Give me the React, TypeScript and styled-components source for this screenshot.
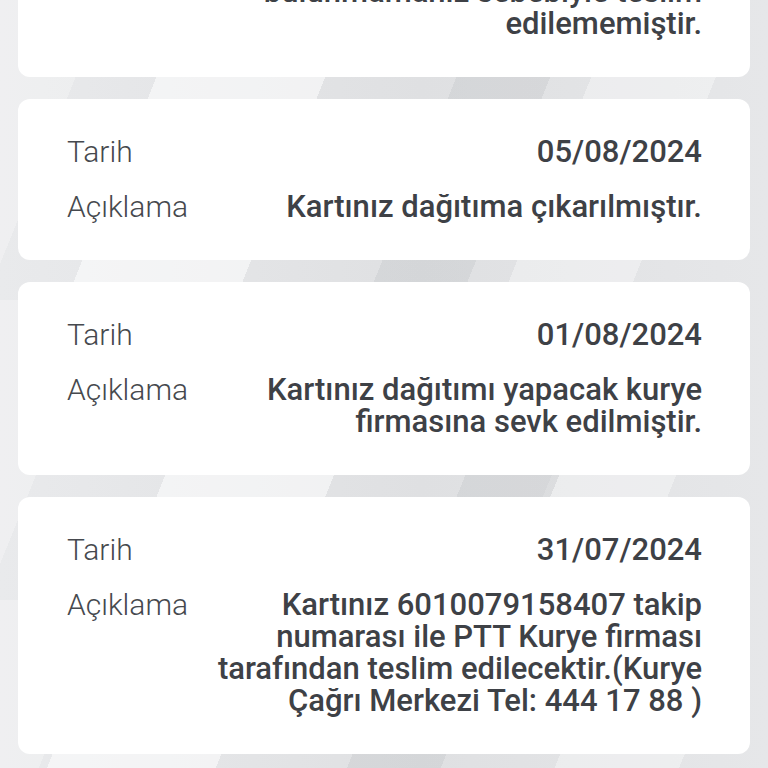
import React from 'react';
import styled, { createGlobalStyle } from 'styled-components';

type Movement = {
  id: number;
  date: string;
  description: string;
};

const movements: Movement[] = [
  {
    id: 1,
    date: '06/08/2024',
    description: 'Kartınız adresinizde\nbulunmamanız sebebiyle teslim\nedilememiştir.',
  },
  { id: 2, date: '05/08/2024', description: 'Kartınız dağıtıma çıkarılmıştır.' },
  {
    id: 3,
    date: '01/08/2024',
    description: 'Kartınız dağıtımı yapacak kurye\nfirmasına sevk edilmiştir.',
  },
  {
    id: 4,
    date: '31/07/2024',
    description:
      'Kartınız 6010079158407 takip\nnumarası ile PTT Kurye firması\ntarafından teslim edilecektir.(Kurye\nÇağrı Merkezi Tel: 444 17 88 )',
  },
];

const GlobalStyle = createGlobalStyle`
  html, body {
    margin: 0;
    padding: 0;
    height: 100%;
    overflow: hidden;
  }
  body {
    font-family: Roboto, "Noto Sans", sans-serif;
    background-color: #e4e5e7;
    background-image:
      linear-gradient(112deg, transparent 0 20%, rgba(255,255,255,0.55) 20% 38%, transparent 38% 100%),
      linear-gradient(112deg, transparent 0 52%, rgba(200,202,205,0.45) 52% 62%, transparent 62% 100%),
      linear-gradient(112deg, rgba(255,255,255,0.25) 0 12%, transparent 12% 70%, rgba(255,255,255,0.35) 70% 84%, transparent 84% 100%),
      linear-gradient(90deg, #e9eaec 0%, #dfe0e2 55%, #e6e7e9 100%);
    background-size: 768px 420px, 768px 420px, 768px 300px, 100% 100%;
    -webkit-font-smoothing: antialiased;
  }
`;

const Screen = styled.div`
  width: 768px;
  height: 768px;
  overflow: hidden;
`;

// scrolled list: the first card is partly above the top edge
const List = styled.div`
  display: flex;
  flex-direction: column;
  gap: 22px;
  margin-top: -148px;
  padding: 0 18px;
`;

const Card = styled.div`
  background: #ffffff;
  border-radius: 12px;
  padding: 37px 48px 37px 49px;
  display: grid;
  grid-template-columns: auto 1fr;
  row-gap: 23px;
  column-gap: 24px;
  color: #3e4146;
  line-height: 32px;
`;

const Label = styled.div`
  font-size: 30px;
  font-weight: 300;
  color: #46494e;
`;

const Value = styled.div`
  font-size: 31px;
  font-weight: 500;
  text-align: right;
  white-space: pre-line;
`;

function MovementCard({ item }: { item: Movement }) {
  return (
    <Card>
      <Label>Tarih</Label>
      <Value>{item.date}</Value>
      <Label>Açıklama</Label>
      <Value>{item.description}</Value>
    </Card>
  );
}

export default function App() {
  return (
    <>
      <GlobalStyle />
      <Screen>
        <List>
          {movements.map((m) => (
            <MovementCard key={m.id} item={m} />
          ))}
        </List>
      </Screen>
    </>
  );
}
